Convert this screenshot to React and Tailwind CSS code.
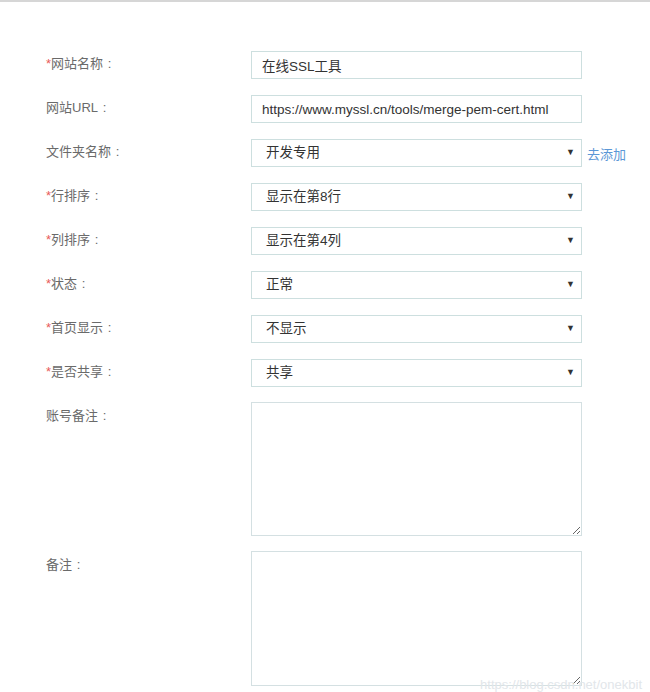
import React from 'react';

const font = { fontFamily: '"Liberation Sans", "Noto Sans CJK SC", sans-serif' };

const Label = ({ required, children, tall }) => (
  <div className={`w-[205px] shrink-0 text-[13px] text-[#6a6a6a] leading-[25px] ${tall ? 'pt-[1px]' : ''}`}>
    {required && <span className="text-[#e85a5a]">*</span>}
    {children}
    <span className="inline-block w-[13px] text-center">:</span>
  </div>
);

const Select = ({ value }) => (
  <div className="w-[331px] h-[28px] border border-[#cddfdf] bg-white flex items-center justify-between pl-[14px] pr-[6px] text-[13.5px] text-[#333]">
    <span className="pt-[1px]">{value}</span>
    <span className="text-[9px] text-[#333]">▼</span>
  </div>
);

const Input = ({ value }) => (
  <input
    readOnly
    value={value}
    className="w-[331px] h-[28px] border border-[#cddfdf] bg-white px-[10px] text-[13.5px] text-[#333] outline-none"
    style={font}
  />
);

export default function App() {
  return (
    <div className="relative w-[650px] h-[692px] bg-white overflow-hidden" style={font}>
      <div className="h-[2px] bg-[#d6d6d6]" />
      <div className="pl-[46px] pt-[49px] flex flex-col gap-4">
        <div className="flex h-[28px]">
          <Label required>网站名称</Label>
          <Input value="在线SSL工具" />
        </div>
        <div className="flex h-[28px]">
          <Label>网站URL</Label>
          <Input value="https://www.myssl.cn/tools/merge-pem-cert.html" />
        </div>
        <div className="flex h-[28px] items-start">
          <Label>文件夹名称</Label>
          <Select value="开发专用" />
          <a className="ml-[5px] text-[13px] leading-[31px] text-[#5b97d6]">去添加</a>
        </div>
        <div className="flex h-[28px]">
          <Label required>行排序</Label>
          <Select value="显示在第8行" />
        </div>
        <div className="flex h-[28px]">
          <Label required>列排序</Label>
          <Select value="显示在第4列" />
        </div>
        <div className="flex h-[28px]">
          <Label required>状态</Label>
          <Select value="正常" />
        </div>
        <div className="flex h-[28px]">
          <Label required>首页显示</Label>
          <Select value="不显示" />
        </div>
        <div className="flex h-[28px]">
          <Label required>是否共享</Label>
          <Select value="共享" />
        </div>
        <div className="flex items-start -mt-px">
          <Label tall>账号备注</Label>
          <textarea className="w-[331px] h-[134px] border border-[#d4e0e2] bg-white resize-y outline-none" />
        </div>
        <div className="flex items-start -mt-px">
          <Label tall>备注</Label>
          <textarea className="w-[331px] h-[135px] border border-[#d4e0e2] bg-white resize-y outline-none" />
        </div>
      </div>
      <div className="absolute right-[8px] bottom-[-2px] text-[13px] text-[#e2e6ea]">
        https://blog.csdn.net/onekbit
      </div>
    </div>
  );
}
